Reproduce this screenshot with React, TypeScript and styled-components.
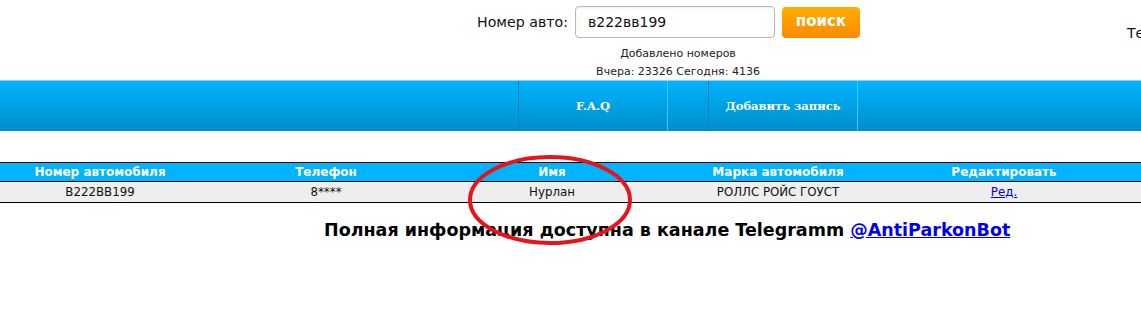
import React from "react";
import styled, { createGlobalStyle } from "styled-components";

interface CarRecord {
  number: string;
  phone: string;
  name: string;
  brand: string;
}

const records: CarRecord[] = [
  { number: "В222ВВ199", phone: "8****", name: "Нурлан", brand: "РОЛЛС РОЙС ГОУСТ" },
];

const columns = [
  "Номер автомобиля",
  "Телефон",
  "Имя",
  "Марка автомобиля",
  "Редактировать",
];

function App() {
  return (
    <Page>
      <GlobalStyle />
      <Header>
        <SearchBlock>
          <SearchRow>
            <Label>Номер авто:</Label>
            <SearchInput defaultValue="в222вв199" />
            <SearchButton>поиск</SearchButton>
          </SearchRow>
          <Stats>
            <div>Добавлено номеров</div>
            <div>Вчера: 23326 Сегодня: 4136</div>
          </Stats>
        </SearchBlock>
        <Contact>Телефон</Contact>
      </Header>

      <NavBar>
        <NavItem>F.A.Q</NavItem>
        <NavItem>Добавить запись</NavItem>
      </NavBar>

      <TableArea>
        <Table>
          <HeadRow>
            {columns.map((c) => (
              <HeadCell key={c}>{c}</HeadCell>
            ))}
            <span />
          </HeadRow>
          {records.map((r) => (
            <BodyRow key={r.number}>
              <Cell>{r.number}</Cell>
              <Cell>{r.phone}</Cell>
              <Cell>{r.name}</Cell>
              <Cell>{r.brand}</Cell>
              <Cell>
                <EditLink href="#">Ред.</EditLink>
              </Cell>
              <span />
            </BodyRow>
          ))}
        </Table>
        <Ellipse width="168" height="96" viewBox="0 0 168 96">
          <ellipse cx="84" cy="48" rx="80" ry="43" />
        </Ellipse>
      </TableArea>

      <Notice>
        Полная информация доступна в канале Telegramm{" "}
        <BotLink href="#">@AntiParkonBot</BotLink>
      </Notice>
    </Page>
  );
}

export default App;

const GlobalStyle = createGlobalStyle`
  html, body {
    margin: 0;
    padding: 0;
    background: #fff;
    overflow: hidden;
  }
  body {
    font-family: "DejaVu Sans", Verdana, sans-serif;
  }
`;

const Page = styled.div`
  width: 1141px;
  height: 320px;
  overflow: hidden;
`;

const Header = styled.div`
  display: flex;
  height: 80px;
`;

const SearchBlock = styled.div`
  flex: 0 0 auto;
  width: 382px;
  margin-left: 477px;
  padding-top: 6px;
  display: flex;
  flex-direction: column;
`;

const SearchRow = styled.div`
  display: flex;
  align-items: center;
`;

const Label = styled.span`
  flex: 0 0 auto;
  width: 98px;
  white-space: nowrap;
  font-size: 14.2px;
  color: #111;
`;

const SearchInput = styled.input`
  flex: 0 0 auto;
  box-sizing: border-box;
  width: 200px;
  height: 32px;
  border: 1px solid #b9b9b9;
  border-radius: 4px;
  padding: 0 12px;
  font-family: "DejaVu Sans", Verdana, sans-serif;
  font-size: 14px;
  color: #111;
  outline: none;
  box-shadow: inset 0 1px 2px rgba(0, 0, 0, 0.08);
`;

const SearchButton = styled.button`
  flex: 0 0 auto;
  box-sizing: border-box;
  margin-left: 7px;
  width: 78px;
  height: 31px;
  border: none;
  border-radius: 4px;
  background: linear-gradient(#ffad00, #ff8a00);
  color: #fff;
  font-family: "DejaVu Sans", Verdana, sans-serif;
  font-weight: bold;
  font-size: 15px;
  padding: 0 0 2px;
`;

const Stats = styled.div`
  padding-left: 20px;
  margin-top: 7px;
  text-align: center;
  font-size: 11px;
  line-height: 18px;
  color: #222;
`;

const Contact = styled.div`
  flex: 0 0 auto;
  margin-left: 268px;
  padding-top: 25px;
  font-size: 14px;
  color: #111;
  white-space: nowrap;
`;

const NavBar = styled.div`
  display: flex;
  height: 50px;
  padding-left: 518px;
  gap: 40px;
  border-top: 1px solid #7fd9ff;
  background: linear-gradient(#00b3fd, #008ecb);
`;

const NavItem = styled.div`
  width: 148px;
  display: flex;
  align-items: center;
  justify-content: center;
  border-left: 1px solid #0283b9;
  border-right: 1px solid #42c6ff;
  color: #fff;
  font-family: "DejaVu Serif", "Liberation Serif", serif;
  font-weight: bold;
  font-size: 11.5px;
`;

const TableArea = styled.div`
  position: relative;
  margin-top: 31px;
`;

const Table = styled.div`
  margin-left: -13px;
  border-top: 1px solid #000;
  border-bottom: 1px solid #000;
`;

const HeadRow = styled.div`
  display: grid;
  grid-template-columns: repeat(5, 226px) 1fr;
  height: 18px;
  background: #00b4ff;
  border-bottom: 1px solid #000;
`;

const HeadCell = styled.div`
  text-align: center;
  color: #fff;
  font-weight: bold;
  font-size: 12px;
  line-height: 18px;
`;

const BodyRow = styled.div`
  display: grid;
  grid-template-columns: repeat(5, 226px) 1fr;
  height: 20px;
  background: #eeeeee;
`;

const Cell = styled.div`
  text-align: center;
  color: #111;
  font-size: 11.8px;
  line-height: 20px;
`;

const EditLink = styled.a`
  color: #0000ee;
  text-decoration: underline;
`;

const Ellipse = styled.svg`
  position: absolute;
  left: 466px;
  top: -10px;
  overflow: visible;

  ellipse {
    fill: none;
    stroke: #e8141c;
    stroke-width: 4;
  }
`;

const Notice = styled.div`
  margin-top: 17px;
  padding-left: 324px;
  font-size: 17.5px;
  font-weight: bold;
  color: #000;
  white-space: nowrap;
`;

const BotLink = styled.a`
  color: #0000ee;
  text-decoration: underline;
`;
